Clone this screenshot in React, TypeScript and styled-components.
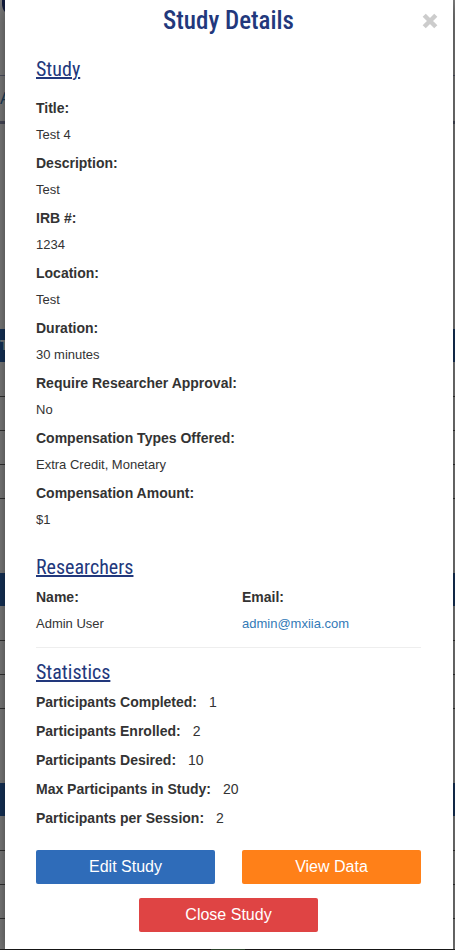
import React from "react";
import styled, { createGlobalStyle } from "styled-components";

const GlobalStyle = createGlobalStyle`
  *, *::before, *::after { box-sizing: border-box; }
  body {
    margin: 0;
    background: #fff;
    color: #333;
    font-family: "Liberation Sans", Arial, sans-serif;
    font-size: 14px;
    line-height: 20px;
  }
  h1, h2, dl, dt, dd, p { margin: 0; }
`;

const display = `"Roboto Condensed", Roboto, sans-serif`;

/* The page and the dialog layer share one grid cell. */
const Stage = styled.div`
  display: grid;
  grid-template: minmax(100vh, auto) / minmax(0, 1fr);
  overflow: hidden;
  & > * { grid-area: 1 / 1; }
`;

const Page = styled.div`
  display: flex;
  flex-direction: column;
  overflow: hidden;
`;

const Masthead = styled.div`
  flex: none;
  height: 76px;
  padding-left: 2px;
  border-bottom: 1px solid #a0a4c8;
`;

const Logo = styled.div`
  width: 60px;
  height: 16px;
  border-bottom-left-radius: 12px;
  background: #24387c;
`;

const NavStrip = styled.div`
  flex: none;
  height: 48px;
  padding-top: 13px;
  border-bottom: 3px solid #9094b4;
  color: #337ab7;
  font-size: 16px;
`;

const Listing = styled.div<{ $gap: number }>`
  flex: none;
  margin-top: ${(p) => p.$gap}px;
`;

const ListingHead = styled.div`
  height: 33px;
  padding-top: 6px;
  background: #2c66b4;
  color: #fff;
  font-weight: bold;
`;

const ListingRow = styled.div`
  height: 34px;
  border-bottom: 1px solid #666;
  &:nth-child(2) { height: 35px; }
`;

const PageFooter = styled.div`
  flex: none;
  display: flex;
  justify-content: center;
  height: 1px;
  margin-top: auto;
  background: #444;
`;

const FooterAccent = styled.div`
  width: 34px;
  background: #8fd08f;
`;

const Overlay = styled.div`
  display: flex;
  align-items: flex-start;
  padding: 0 2px 0 5px;
  background: rgba(0, 0, 0, 0.5);
`;

const Dialog = styled.section`
  flex: 1;
  min-width: 0;
  padding: 0 32px 17px 31px;
  background: #fff;
  box-shadow: 0 5px 15px rgba(0, 0, 0, 0.5);
`;

const DialogHeader = styled.header`
  display: grid;
  grid-template-columns: 16px 1fr 16px;
  align-items: center;
  height: 41px;
  margin-right: -17px;
  margin-left: -17px;
`;

const DialogTitle = styled.h1`
  grid-column: 2;
  color: #22387c;
  font: 500 25px/41px ${display};
  text-align: center;
`;

const CloseButton = styled.button`
  display: flex;
  padding: 0;
  border: 0;
  background: none;
  color: #ccc;
  cursor: pointer;
`;

const SectionTitle = styled.h2<{ $gap: number }>`
  margin-top: ${(p) => p.$gap}px;
  color: #22387c;
  font: 400 20px/24px ${display};
  text-decoration: underline;
`;

const FieldList = styled.dl`
  display: grid;
  gap: 8px;
  margin-top: 17px;
`;

const ResearcherList = styled.dl`
  display: grid;
  grid-template-columns: 1fr 1fr;
  gap: 27px;
  margin-top: 8px;
  padding-bottom: 13px;
  border-bottom: 1px solid #eee;
`;

const Field = styled.div`
  display: grid;
  gap: 7px;
`;

const Label = styled.dt`
  font-weight: bold;
`;

const Value = styled.dd`
  font-size: 13px;
`;

const StatList = styled.dl`
  display: grid;
  gap: 9px;
  margin-top: 8px;
`;

const Stat = styled.div`
  display: flex;
  gap: 12px;
`;

const MailLink = styled.a`
  color: #337ab7;
  text-decoration: none;
`;

const Actions = styled.div`
  display: grid;
  grid-template-columns: repeat(2, 1fr);
  gap: 14px 27px;
  margin-top: 22px;
`;

const ActionButton = styled.button<{ $color: string }>`
  height: 34px;
  padding: 0;
  border: 0;
  border-radius: 2px;
  background: ${(p) => p.$color};
  color: #fff;
  font: 16px/34px "Liberation Sans", Arial, sans-serif;
  cursor: pointer;
`;

const CenteredAction = styled.div`
  grid-column: 1 / -1;
  display: grid;
  grid-template-columns: calc(50% - 14px);
  justify-content: center;
`;

const fields = [
  ["Title:", "Test 4"],
  ["Description:", "Test"],
  ["IRB #:", "1234"],
  ["Location:", "Test"],
  ["Duration:", "30 minutes"],
  ["Require Researcher Approval:", "No"],
  ["Compensation Types Offered:", "Extra Credit, Monetary"],
  ["Compensation Amount:", "$1"],
];

const stats = [
  ["Participants Completed:", "1"],
  ["Participants Enrolled:", "2"],
  ["Participants Desired:", "10"],
  ["Max Participants in Study:", "20"],
  ["Participants per Session:", "2"],
];

const listings = [
  { gap: 205, rows: 4, head: "T" },
  { gap: 74, rows: 3, head: "" },
  { gap: 74, rows: 3, head: "" },
];

function CloseIcon() {
  return (
    <svg width="16" height="16" viewBox="0 0 16 16" aria-hidden="true">
      <path d="M2.2 2.2L13.8 13.8M13.8 2.2L2.2 13.8" stroke="currentColor" strokeWidth="4.4" />
    </svg>
  );
}

export default function App() {
  return (
    <>
      <GlobalStyle />
      <Stage>
        <Page aria-hidden="true">
          <Masthead>
            <Logo />
          </Masthead>
          <NavStrip>A</NavStrip>
          {listings.map((listing, i) => (
            <Listing key={i} $gap={listing.gap}>
              <ListingHead>{listing.head}</ListingHead>
              {Array.from({ length: listing.rows }, (_, r) => (
                <ListingRow key={r} />
              ))}
            </Listing>
          ))}
          <PageFooter>
            <FooterAccent />
          </PageFooter>
        </Page>
        <Overlay>
          <Dialog role="dialog" aria-modal="true" aria-labelledby="dialog-title">
            <DialogHeader>
              <DialogTitle id="dialog-title">Study Details</DialogTitle>
              <CloseButton type="button" aria-label="Close">
                <CloseIcon />
              </CloseButton>
            </DialogHeader>

            <SectionTitle $gap={16}>Study</SectionTitle>
            <FieldList>
              {fields.map(([label, value]) => (
                <Field key={label}>
                  <Label>{label}</Label>
                  <Value>{value}</Value>
                </Field>
              ))}
            </FieldList>

            <SectionTitle $gap={25}>Researchers</SectionTitle>
            <ResearcherList>
              <Field>
                <Label>Name:</Label>
                <Value>Admin User</Value>
              </Field>
              <Field>
                <Label>Email:</Label>
                <Value>
                  <MailLink href="mailto:admin@mxiia.com">admin@mxiia.com</MailLink>
                </Value>
              </Field>
            </ResearcherList>

            <SectionTitle $gap={12}>Statistics</SectionTitle>
            <StatList>
              {stats.map(([label, value]) => (
                <Stat key={label}>
                  <Label>{label}</Label>
                  <dd>{value}</dd>
                </Stat>
              ))}
            </StatList>

            <Actions>
              <ActionButton type="button" $color="#2f6cb9">
                Edit Study
              </ActionButton>
              <ActionButton type="button" $color="#ff8018">
                View Data
              </ActionButton>
              <CenteredAction>
                <ActionButton type="button" $color="#df4444">
                  Close Study
                </ActionButton>
              </CenteredAction>
            </Actions>
          </Dialog>
        </Overlay>
      </Stage>
    </>
  );
}
